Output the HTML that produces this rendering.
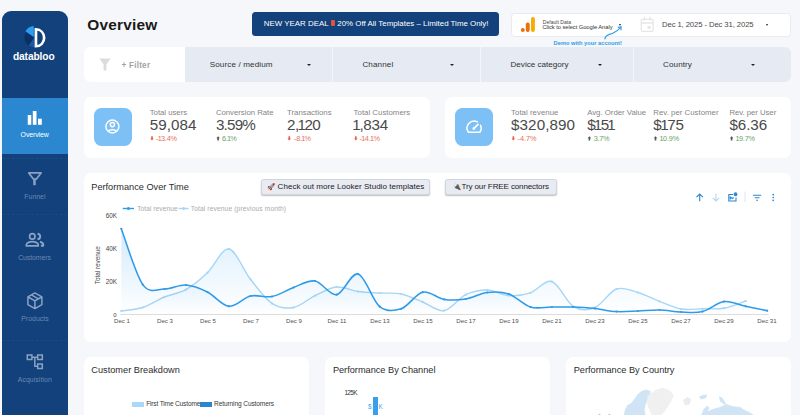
<!DOCTYPE html>
<html><head><meta charset="utf-8">
<style>
*{box-sizing:border-box;margin:0;padding:0}
html{background:#f6f7fa}html,body{width:800px;height:415px;overflow:hidden;font-family:"Liberation Sans",sans-serif;color:#333}
.abs,.tx,.tri,.btn{position:absolute}
.tx{white-space:nowrap;line-height:1}
.n1{margin:0 -0.066em 0 -0.085em}
.card{background:#fff;border-radius:7px}
.tri{width:0;height:0;border-left:2px solid transparent;border-right:2px solid transparent;border-top:2.5px solid #222}
.btn{height:16px;background:#e8ebf1;border:1px solid #d0d4db;border-radius:2.5px;box-shadow:0 1px 1.5px rgba(0,0,0,.25)}
</style></head><body>
<div class="abs" style="left:2px;top:11px;width:65.8px;height:410px;background:#12417b;border-radius:9px 9px 0 0"></div>
<div class="abs" style="left:2px;top:97.5px;width:65.8px;height:56.5px;background:#2b88d0"></div>
<div class="abs" style="left:2px;top:157.6px;width:65.800px;height:0;border-top:1px dashed #1a4a86"></div>
<div class="abs" style="left:2px;top:213.8px;width:65.800px;height:0;border-top:1px dashed #1a4a86"></div>
<div class="abs" style="left:2px;top:340.4px;width:65.800px;height:0;border-top:1px dashed #1a4a86"></div>
<!-- logo + nav icons + misc icons, page coordinates -->
<svg class="abs" style="left:0;top:0" width="800" height="415" viewBox="0 0 800 415">
<path d="M34.300 37.600L25.800 32.800A9.800 9.800 0 0 0 34.300 47.400Z" fill="#0c2f66"/>
<path d="M34.300 37.600L28.600 45.600A9.800 9.800 0 0 0 34.300 47.400Z" fill="#1b58a6"/>
<path d="M33.800 26.100V37.100L25.500 31.300A10 10 0 0 1 33.800 26.100Z" fill="#2a9df0"/>
<path d="M34.6 28.1h1.4a9.5 9.75 0 0 1 0 19.5h-1.4zM37.3 30.8v14.1a5.5 7.05 0 0 0 0-14.1z" fill="#fff" fill-rule="evenodd"/>
<!-- overview bars -->
<rect x="27.750" y="115" width="3.500" height="9.800" fill="#fff"/><rect x="32.800" y="111" width="3.700" height="13.800" fill="#fff"/><rect x="38" y="118.700" width="3.800" height="6.100" fill="#fff"/>
<g fill="none" stroke="#8aa2c4" stroke-width="1.700" stroke-linejoin="round">
<path d="M28.700 172.900h12.400l-4.900 6.300h-2.600z"/><path d="M34.500 179v6.200" stroke-width="2.500" stroke-linecap="butt"/>
<circle cx="32.300" cy="236.400" r="2.700"/><path d="M26.300 245.800v-1c0-2.200 4-3.200 6-3.200s6 1 6 3.200v1z"/>
<path d="M37.500 233.700a2.700 2.700 0 0 1 0 5.400M40 241.800c1.700.5 3.200 1.400 3.200 2.900v1.100h-2.300" stroke-width="2"/>
<path d="M34.900 292.900l7 3.900v7.800l-7 4-7-4v-7.800zM28.200 297l6.700 3.800 6.700-3.800M34.900 300.800v7.600M31.400 294.900l7 3.900" stroke-width="1.500"/>
<path d="M27.300 355h4.600v4.600h-4.600zM37.700 355h4.600v4.600h-4.600zM37.700 364h4.600v4.600h-4.600zM31.900 357.300h5.800M34.800 357.300v9h2.900" stroke-width="1.500" stroke-linejoin="miter"/>
</g>
<!-- GA icon -->
<rect x="531" y="17" width="3.900" height="15" rx="1.900" fill="#f9ab00"/><rect x="525.800" y="22.500" width="3.900" height="9.500" rx="1.900" fill="#e8710a"/><circle cx="522.800" cy="30" r="1.950" fill="#e8710a"/>
<!-- blue arrow -->
<path d="M604.800 39.300c0.500-5 4.500-4.500 8-6s5.500-3 7.700-5.800" fill="none" stroke="#2b9be8" stroke-width="1.200"/><path d="M617.800 27.300l3.300-0.400-.2 3.300" fill="none" stroke="#2b9be8" stroke-width="1.200"/>
<!-- calendar -->
<g fill="none" stroke="#e6e6e6" stroke-width="1.300"><rect x="641.300" y="19.300" width="11.800" height="12" rx="1.600"/><path d="M641.300 23h11.800M644.5 16.8v3.5M650 16.8v3.5"/></g><rect x="647.500" y="26" width="3" height="3" fill="#e6e6e6"/>
<!-- filter icon -->
<path d="M99.300 58.500h11.400l-4.300 5.700v6.300h-2.800v-6.300z" fill="#dcdcdc"/>
<!-- KPI icons -->
<g fill="none" stroke="#fff" stroke-width="1.450"><circle cx="112.400" cy="126.500" r="6.500"/><circle cx="112.400" cy="124.600" r="2.100"/><path d="M108.300 131.300c1-2.200 7.200-2.200 8.200 0"/></g>
<g fill="none" stroke="#fff" stroke-width="1.500" stroke-linejoin="round" stroke-linecap="round"><path d="M468.400 132.200A7 7 0 0 1 477.400 121.950M480.500 125.200A7 7 0 0 1 479.800 132.200H468.400"/><path d="M474 128.400L478 124.300" stroke-width="1.700"/></g><circle cx="473.800" cy="128.600" r="1.400" fill="#fff"/>
<!-- delta arrows -->
<g fill="#e8604c"><path id="dn" d="M151.200 136.200h1.600v2.200h1l-1.800 2-1.800-2h1z"/><use href="#dn" x="137.250"/><use href="#dn" x="203.850"/><use href="#dn" x="361.350"/></g>
<g fill="#555"><path id="up" d="M217.300 140.400h1.600v-2.200h1l-1.800-2-1.800 2h1z"/><use href="#up" x="371.300"/><use href="#up" x="437.400"/><use href="#up" x="513.500"/></g>
</svg>
<div class="tri" style="left:619.1px;top:23.7px;border-left-width:1.6px;border-right-width:1.6px;border-top-width:2px"></div>
<div class="tri" style="left:765.600px;top:23.500px;border-left-width:1.700px;border-right-width:1.700px;border-top-width:2.100px"></div>

<!-- header -->
<div class="abs" style="left:252px;top:12.300px;width:247px;height:23.400px;background:#12417b;border-radius:3.500px"></div>
<div class="abs" style="left:511px;top:12.500px;width:280px;height:24px;background:#fff;border:1px solid #e8eaef;border-radius:3.500px;z-index:-1"></div>

<!-- filter bar -->
<div class="abs" style="left:84px;top:47px;width:706.500px;height:35px;background:#e6eaf2;border-radius:6px;z-index:-1"></div>
<div class="abs" style="left:84px;top:47px;width:101px;height:35px;background:#fff;border-radius:6px 0 0 6px;z-index:-1"></div>
<div class="abs" style="left:332px;top:47px;width:1px;height:35px;background:#f3f5f9"></div>
<div class="abs" style="left:480px;top:47px;width:1px;height:35px;background:#f3f5f9"></div>
<div class="abs" style="left:633px;top:47px;width:1px;height:35px;background:#f3f5f9"></div>
<div class="tri" style="left:307.400px;top:63.500px"></div>
<div class="tri" style="left:450.200px;top:63.500px"></div>
<div class="tri" style="left:598px;top:63.500px"></div>
<div class="tri" style="left:751px;top:63.500px"></div>

<!-- cards -->
<div class="abs card" style="left:84px;top:97px;width:345.500px;height:61px;z-index:-1"></div>
<div class="abs card" style="left:444.500px;top:97px;width:346px;height:61px;z-index:-1"></div>
<div class="abs" style="left:93.500px;top:108px;width:38px;height:38px;border-radius:7.500px;background:#7cc0f5;z-index:-1"></div>
<div class="abs" style="left:455px;top:108px;width:38px;height:38px;border-radius:7.500px;background:#7cc0f5;z-index:-1"></div>
<div class="abs card" style="left:84px;top:172.500px;width:706.500px;height:169.500px;z-index:-2"></div>
<div class="btn" style="left:261px;top:178.7px;width:169px;z-index:-1"></div>
<div class="btn" style="left:444.5px;top:178.7px;width:112.500px;z-index:-1"></div>
<div class="tx" style="left:266.6px;top:184px;font-size:6.6px">🚀</div>
<div class="tx" style="left:452.6px;top:184px;font-size:6.6px">🔌</div>

<svg class="abs" style="left:84px;top:172px;z-index:-1" width="706" height="170" viewBox="84 172 706 170" font-family="Liberation Sans, sans-serif">
<defs><linearGradient id="g1" gradientUnits="userSpaceOnUse" x1="0" y1="225" x2="0" y2="314"><stop offset="0" stop-color="#2f9be8" stop-opacity=".22"/><stop offset="1" stop-color="#2f9be8" stop-opacity="0"/></linearGradient>
<linearGradient id="g2" gradientUnits="userSpaceOnUse" x1="0" y1="245" x2="0" y2="314"><stop offset="0" stop-color="#9fd3f7" stop-opacity=".3"/><stop offset="1" stop-color="#9fd3f7" stop-opacity="0"/></linearGradient></defs>
<g stroke="#2b86d0" stroke-width="1.100" fill="none"><path d="M699.700 201.300v-7.300M696.500 197.200l3.200-3.200 3.200 3.200"/><path d="M715.900 193.700v7.300M712.700 197.800l3.200 3.200 3.200-3.200" stroke="#b5d4f0"/><path d="M733 194.500h-4.200v6.500h7.200v-3.500M730.300 199.500v-2.500l2 1.500 1.500-1"/><circle cx="735.500" cy="194.300" r="1.400" fill="#2b86d0"/><path d="M753 195.200h8.200M754.700 197.700h4.800M756.200 200.200h1.800"/></g>
<path d="M745 191.500v10.500" stroke="#d9e6f4" stroke-width="1"/>
<g fill="#2b86d0"><circle cx="773.200" cy="194.700" r="0.850"/><circle cx="773.200" cy="197.500" r="0.850"/><circle cx="773.200" cy="200.300" r="0.850"/></g>
<path d="M122.700 208.500h11.300" stroke="#2f9be8" stroke-width="1.400"/><circle cx="128.400" cy="208.500" r="1.500" fill="#2f9be8"/>
<text x="137.2" y="210.9" font-size="6.7" fill="#ababab" textLength="40.500">Total revenue</text>
<path d="M178.600 208.500h10" stroke="#a6d6f8" stroke-width="1.400"/><circle cx="183.600" cy="208.500" r="1.500" fill="#a6d6f8"/>
<text x="190.7" y="210.9" font-size="6.7" fill="#ababab" textLength="95.400">Total revenue (previous month)</text>
<g font-size="6.4" fill="#444"><text x="105.7" y="217.9" textLength="11.2">60K</text><text x="105.7" y="250.7" textLength="11.2">40K</text><text x="105.7" y="283.5" textLength="11.2">20K</text><text x="113.3" y="316.6" font-size="6">0</text></g>
<text transform="translate(99.8,284.2) rotate(-90)" font-size="6.4" fill="#444" textLength="38">Total revenue</text>
<path d="M120.500 314.500h648" stroke="#dcdcdc" stroke-width="1"/>
<g font-size="6.1" fill="#505050" text-anchor="middle"><text x="122" y="323.300">Dec 1</text><text x="165" y="323.300">Dec 3</text><text x="208" y="323.300">Dec 5</text><text x="251" y="323.300">Dec 7</text><text x="294" y="323.300">Dec 9</text><text x="337" y="323.300">Dec 11</text><text x="380" y="323.300">Dec 13</text><text x="423" y="323.300">Dec 15</text><text x="466" y="323.300">Dec 17</text><text x="509" y="323.300">Dec 19</text><text x="552" y="323.300">Dec 21</text><text x="595" y="323.300">Dec 23</text><text x="638" y="323.300">Dec 25</text><text x="681" y="323.300">Dec 27</text><text x="724" y="323.300">Dec 29</text><text x="767" y="323.300">Dec 31</text></g>
<path d="M121.3 311.0C124.9 310.4 135.7 309.8 142.8 307.5C150.0 305.2 157.2 300.0 164.4 297.0C171.5 294.0 178.7 293.8 185.9 289.7C193.1 285.6 200.2 279.5 207.4 272.7C214.6 265.9 221.8 247.9 228.9 249.0C236.1 250.1 243.3 270.2 250.5 279.3C257.7 288.4 264.8 298.7 272.0 303.4C279.2 308.1 286.4 308.8 293.5 307.5C300.7 306.2 307.9 299.0 315.1 295.6C322.2 292.2 329.4 287.7 336.6 287.0C343.8 286.3 351.0 290.5 358.1 291.5C365.3 292.5 372.5 292.6 379.7 293.0C386.8 293.4 394.0 292.5 401.2 294.0C408.4 295.5 415.5 299.2 422.7 302.0C429.9 304.8 437.1 311.8 444.3 310.6C451.4 309.4 458.6 298.1 465.8 294.7C473.0 291.3 480.1 289.9 487.3 290.0C494.5 290.1 501.7 295.1 508.8 295.6C516.0 296.1 523.2 295.2 530.4 292.8C537.5 290.4 544.7 279.2 551.9 281.5C559.1 283.8 566.3 302.3 573.4 306.6C580.6 310.9 587.8 310.4 595.0 307.5C602.1 304.6 609.3 291.5 616.5 289.0C623.7 286.5 630.8 290.4 638.0 292.5C645.2 294.6 652.4 298.6 659.5 301.3C666.7 304.1 673.9 307.8 681.1 309.0C688.3 310.2 695.4 308.9 702.6 308.8C709.8 308.7 717.0 309.5 724.1 308.2C731.3 306.9 742.1 302.2 745.7 301.0L745.7 314L121.3 314Z" fill="url(#g2)"/><path d="M121.3 311.0C124.9 310.4 135.7 309.8 142.8 307.5C150.0 305.2 157.2 300.0 164.4 297.0C171.5 294.0 178.7 293.8 185.9 289.7C193.1 285.6 200.2 279.5 207.4 272.7C214.6 265.9 221.8 247.9 228.9 249.0C236.1 250.1 243.3 270.2 250.5 279.3C257.7 288.4 264.8 298.7 272.0 303.4C279.2 308.1 286.4 308.8 293.5 307.5C300.7 306.2 307.9 299.0 315.1 295.6C322.2 292.2 329.4 287.7 336.6 287.0C343.8 286.3 351.0 290.5 358.1 291.5C365.3 292.5 372.5 292.6 379.7 293.0C386.8 293.4 394.0 292.5 401.2 294.0C408.4 295.5 415.5 299.2 422.7 302.0C429.9 304.8 437.1 311.8 444.3 310.6C451.4 309.4 458.6 298.1 465.8 294.7C473.0 291.3 480.1 289.9 487.3 290.0C494.5 290.1 501.7 295.1 508.8 295.6C516.0 296.1 523.2 295.2 530.4 292.8C537.5 290.4 544.7 279.2 551.9 281.5C559.1 283.8 566.3 302.3 573.4 306.6C580.6 310.9 587.8 310.4 595.0 307.5C602.1 304.6 609.3 291.5 616.5 289.0C623.7 286.5 630.8 290.4 638.0 292.5C645.2 294.6 652.4 298.6 659.5 301.3C666.7 304.1 673.9 307.8 681.1 309.0C688.3 310.2 695.4 308.9 702.6 308.8C709.8 308.7 717.0 309.5 724.1 308.2C731.3 306.9 742.1 302.2 745.7 301.0" fill="none" stroke="#a6d6f8" stroke-width="1.4" stroke-linecap="round"/><g fill="#a6d6f8"><circle cx="121.3" cy="311.0" r="1.1"/><circle cx="142.8" cy="307.5" r="1.1"/><circle cx="164.4" cy="297.0" r="1.1"/><circle cx="185.9" cy="289.7" r="1.1"/><circle cx="207.4" cy="272.7" r="1.1"/><circle cx="228.9" cy="249.0" r="1.1"/><circle cx="250.5" cy="279.3" r="1.1"/><circle cx="272.0" cy="303.4" r="1.1"/><circle cx="293.5" cy="307.5" r="1.1"/><circle cx="315.1" cy="295.6" r="1.1"/><circle cx="336.6" cy="287.0" r="1.1"/><circle cx="358.1" cy="291.5" r="1.1"/><circle cx="379.7" cy="293.0" r="1.1"/><circle cx="401.2" cy="294.0" r="1.1"/><circle cx="422.7" cy="302.0" r="1.1"/><circle cx="444.3" cy="310.6" r="1.1"/><circle cx="465.8" cy="294.7" r="1.1"/><circle cx="487.3" cy="290.0" r="1.1"/><circle cx="508.8" cy="295.6" r="1.1"/><circle cx="530.4" cy="292.8" r="1.1"/><circle cx="551.9" cy="281.5" r="1.1"/><circle cx="573.4" cy="306.6" r="1.1"/><circle cx="595.0" cy="307.5" r="1.1"/><circle cx="616.5" cy="289.0" r="1.1"/><circle cx="638.0" cy="292.5" r="1.1"/><circle cx="659.5" cy="301.3" r="1.1"/><circle cx="681.1" cy="309.0" r="1.1"/><circle cx="702.6" cy="308.8" r="1.1"/><circle cx="724.1" cy="308.2" r="1.1"/><circle cx="745.7" cy="301.0" r="1.1"/></g>
<path d="M121.3 228.8C124.9 238.1 135.7 274.6 142.8 284.6C150.0 294.6 157.2 288.9 164.4 289.0C171.5 289.1 178.7 284.5 185.9 285.0C193.1 285.5 200.2 288.4 207.4 292.0C214.6 295.6 221.8 305.6 228.9 306.3C236.1 307.0 243.3 297.6 250.5 296.0C257.7 294.4 264.8 297.9 272.0 296.5C279.2 295.1 286.4 290.1 293.5 287.5C300.7 284.9 307.9 279.8 315.1 281.0C322.2 282.2 329.4 295.9 336.6 294.7C343.8 293.5 351.0 272.0 358.1 274.0C365.3 276.0 372.5 300.8 379.7 306.6C386.8 312.4 394.0 311.2 401.2 308.8C408.4 306.4 415.5 293.8 422.7 292.2C429.9 290.6 437.1 298.3 444.3 299.4C451.4 300.5 458.6 300.1 465.8 299.0C473.0 297.9 480.1 293.3 487.3 292.5C494.5 291.7 501.7 291.6 508.8 294.0C516.0 296.4 523.2 304.8 530.4 307.0C537.5 309.2 544.7 307.0 551.9 307.0C559.1 307.0 566.3 306.8 573.4 307.0C580.6 307.2 587.8 307.7 595.0 308.5C602.1 309.3 609.3 311.2 616.5 311.6C623.7 312.0 630.8 311.3 638.0 311.0C645.2 310.7 652.4 309.8 659.5 310.0C666.7 310.2 673.9 311.7 681.1 312.0C688.3 312.3 695.4 313.3 702.6 311.6C709.8 309.9 717.0 302.5 724.1 301.6C731.3 300.7 738.5 304.8 745.7 306.3C752.8 307.8 763.6 310.0 767.2 310.7L767.2 314L121.3 314Z" fill="url(#g1)"/><path d="M121.3 228.8C124.9 238.1 135.7 274.6 142.8 284.6C150.0 294.6 157.2 288.9 164.4 289.0C171.5 289.1 178.7 284.5 185.9 285.0C193.1 285.5 200.2 288.4 207.4 292.0C214.6 295.6 221.8 305.6 228.9 306.3C236.1 307.0 243.3 297.6 250.5 296.0C257.7 294.4 264.8 297.9 272.0 296.5C279.2 295.1 286.4 290.1 293.5 287.5C300.7 284.9 307.9 279.8 315.1 281.0C322.2 282.2 329.4 295.9 336.6 294.7C343.8 293.5 351.0 272.0 358.1 274.0C365.3 276.0 372.5 300.8 379.7 306.6C386.8 312.4 394.0 311.2 401.2 308.8C408.4 306.4 415.5 293.8 422.7 292.2C429.9 290.6 437.1 298.3 444.3 299.4C451.4 300.5 458.6 300.1 465.8 299.0C473.0 297.9 480.1 293.3 487.3 292.5C494.5 291.7 501.7 291.6 508.8 294.0C516.0 296.4 523.2 304.8 530.4 307.0C537.5 309.2 544.7 307.0 551.9 307.0C559.1 307.0 566.3 306.8 573.4 307.0C580.6 307.2 587.8 307.7 595.0 308.5C602.1 309.3 609.3 311.2 616.5 311.6C623.7 312.0 630.8 311.3 638.0 311.0C645.2 310.7 652.4 309.8 659.5 310.0C666.7 310.2 673.9 311.7 681.1 312.0C688.3 312.3 695.4 313.3 702.6 311.6C709.8 309.9 717.0 302.5 724.1 301.6C731.3 300.7 738.5 304.8 745.7 306.3C752.8 307.8 763.6 310.0 767.2 310.7" fill="none" stroke="#2f9be8" stroke-width="1.55" stroke-linecap="round"/><g fill="#2f9be8"><circle cx="121.3" cy="228.8" r="1.1"/><circle cx="142.8" cy="284.6" r="1.1"/><circle cx="164.4" cy="289.0" r="1.1"/><circle cx="185.9" cy="285.0" r="1.1"/><circle cx="207.4" cy="292.0" r="1.1"/><circle cx="228.9" cy="306.3" r="1.1"/><circle cx="250.5" cy="296.0" r="1.1"/><circle cx="272.0" cy="296.5" r="1.1"/><circle cx="293.5" cy="287.5" r="1.1"/><circle cx="315.1" cy="281.0" r="1.1"/><circle cx="336.6" cy="294.7" r="1.1"/><circle cx="358.1" cy="274.0" r="1.1"/><circle cx="379.7" cy="306.6" r="1.1"/><circle cx="401.2" cy="308.8" r="1.1"/><circle cx="422.7" cy="292.2" r="1.1"/><circle cx="444.3" cy="299.4" r="1.1"/><circle cx="465.8" cy="299.0" r="1.1"/><circle cx="487.3" cy="292.5" r="1.1"/><circle cx="508.8" cy="294.0" r="1.1"/><circle cx="530.4" cy="307.0" r="1.1"/><circle cx="551.9" cy="307.0" r="1.1"/><circle cx="573.4" cy="307.0" r="1.1"/><circle cx="595.0" cy="308.5" r="1.1"/><circle cx="616.5" cy="311.6" r="1.1"/><circle cx="638.0" cy="311.0" r="1.1"/><circle cx="659.5" cy="310.0" r="1.1"/><circle cx="681.1" cy="312.0" r="1.1"/><circle cx="702.6" cy="311.6" r="1.1"/><circle cx="724.1" cy="301.6" r="1.1"/><circle cx="745.7" cy="306.3" r="1.1"/><circle cx="767.2" cy="310.7" r="1.1"/></g>

</svg>

<!-- bottom cards -->
<div class="abs card" style="left:84px;top:357px;width:225px;height:70px;z-index:-1"></div>
<div class="abs card" style="left:325px;top:357px;width:225px;height:70px;z-index:-1"></div>
<div class="abs card" style="left:565.500px;top:357px;width:225px;height:70px;z-index:-1"></div>
<div class="abs" style="left:132.200px;top:401.700px;width:12.200px;height:5px;background:#a9d8f8"></div>
<div class="abs" style="left:200.200px;top:401.700px;width:11.700px;height:5px;background:#2b86d0"></div>
<div class="abs" style="left:373px;top:397px;width:5px;height:20px;background:#3a9fe8"></div>
<svg class="abs" style="left:590px;top:380px" width="200" height="35" viewBox="590 380 200 35"><path d="M623.8 415.0L625.0 409.5L627.5 405.0L631.2 403.0L634.5 398.8L637.5 394.5L641.2 391.2L646.2 389.5L650.8 391.2L649.5 396.2L647.0 401.2L645.5 405.0L644.5 410.0L645.5 415.0Z" fill="#d0e4f6"/><path d="M648.0 395.5L655.5 390.0L662.5 387.5L669.5 390.5L673.8 395.0L671.2 401.2L667.5 407.5L663.8 412.5L661.2 415.0L652.0 415.0L648.8 408.8L646.5 402.5Z" fill="#f0f0f0"/><path d="M683.0 400.0L687.5 397.0L691.2 399.5L689.5 404.5L685.0 405.5Z" fill="#ececec"/><path d="M698.8 397.0L702.5 395.0L707.0 394.5L706.2 398.0L701.2 399.5Z" fill="#d0e4f6"/><path d="M718.8 396.2L722.0 397.5L726.2 403.8L723.8 404.5L720.0 401.2Z" fill="#d0e4f6"/><path d="M701.2 415.0L703.8 408.8L707.5 405.8L709.5 408.0L707.5 411.2L713.8 408.8L720.0 407.0L726.2 404.0L732.5 406.2L740.0 407.0L743.8 409.5L750.0 412.5L753.8 415.0Z" fill="#d0e4f6"/><path d="M598 415l1.500-1.500 1.500 1.500zM608 415l1.500-1.500 1.500 1.500z" fill="#a9d2f2"/></svg>
<div class="tx" style="left:12.90px;top:51.77px;font-size:10.20px;color:#fff;font-weight:bold;letter-spacing:-0.094px">databloo</div>
<div class="tx" style="left:20.60px;top:132.06px;font-size:6.90px;color:#fff;;letter-spacing:-0.071px">Overview</div>
<div class="tx" style="left:24.30px;top:194.06px;font-size:6.90px;color:#6a88b2;;letter-spacing:0.020px">Funnel</div>
<div class="tx" style="left:18.20px;top:255.26px;font-size:6.90px;color:#6a88b2;;letter-spacing:-0.070px">Customers</div>
<div class="tx" style="left:21.20px;top:316.16px;font-size:6.90px;color:#6a88b2;;letter-spacing:0.037px">Products</div>
<div class="tx" style="left:17.80px;top:377.16px;font-size:6.90px;color:#6a88b2;;letter-spacing:0.061px">Acquisition</div>
<div class="tx" style="left:263.80px;top:19.81px;font-size:7.90px;color:#fff;;letter-spacing:0.004px">NEW YEAR DEAL <span style="display:inline-block;width:4.6px;height:6.2px;background:#e8503c;border-radius:1px;vertical-align:-0.5px;letter-spacing:0"></span> 20% Off All Templates – Limited Time Only!</div>
<div class="tx" style="left:87.25px;top:17.06px;font-size:15.40px;color:#1a1a1a;font-weight:bold;letter-spacing:0.225px">Overview</div>
<div class="tx" style="left:542.80px;top:19.77px;font-size:5.00px;color:#444;;letter-spacing:0.034px">Default Data</div>
<div class="tx" style="left:542.40px;top:25.19px;font-size:5.80px;color:#333;;letter-spacing:-0.063px">Click to select Google Analy</div>
<div class="tx" style="left:553.60px;top:40.87px;font-size:5.70px;color:#2b9be8;font-weight:bold;letter-spacing:0.015px">Demo with your account!</div>
<div class="tx" style="left:662.00px;top:20.78px;font-size:7.70px;color:#4a4a4a;;letter-spacing:-0.097px">Dec 1, 2025 - Dec 31, 2025</div>
<div class="tx" style="left:121.50px;top:62.36px;font-size:8.20px;color:#a3a3a3;font-weight:bold;letter-spacing:0.215px">+ Filter</div>
<div class="tx" style="left:209.70px;top:60.94px;font-size:8.10px;color:#333;;letter-spacing:0.121px">Source / medium</div>
<div class="tx" style="left:362.40px;top:60.94px;font-size:8.10px;color:#333;;letter-spacing:0.121px">Channel</div>
<div class="tx" style="left:510.50px;top:60.94px;font-size:8.10px;color:#333;;letter-spacing:0.004px">Device category</div>
<div class="tx" style="left:663.00px;top:60.94px;font-size:8.10px;color:#333;;letter-spacing:0.094px">Country</div>
<div class="tx" style="left:149.75px;top:109.10px;font-size:7.80px;color:#858585;;letter-spacing:-0.032px">Total users</div>
<div class="tx" style="left:215.90px;top:109.10px;font-size:7.80px;color:#858585;;letter-spacing:-0.032px">Conversion Rate</div>
<div class="tx" style="left:287.00px;top:109.10px;font-size:7.80px;color:#858585;;letter-spacing:0.020px">Transactions</div>
<div class="tx" style="left:353.60px;top:109.10px;font-size:7.80px;color:#858585;;letter-spacing:0.024px">Total Customers</div>
<div class="tx" style="left:511.10px;top:109.10px;font-size:7.80px;color:#858585;;letter-spacing:0.037px">Total revenue</div>
<div class="tx" style="left:587.20px;top:109.10px;font-size:7.80px;color:#858585;;letter-spacing:-0.012px">Avg. Order Value</div>
<div class="tx" style="left:653.30px;top:109.10px;font-size:7.80px;color:#858585;;letter-spacing:0.026px">Rev. per Customer</div>
<div class="tx" style="left:729.40px;top:109.10px;font-size:7.80px;color:#858585;;letter-spacing:-0.056px">Rev. per User</div>
<div class="tx" style="left:149.75px;top:117.43px;font-size:15.20px;color:#4a4a4a;;letter-spacing:0.066px">59,084</div>
<div class="tx" style="left:215.90px;top:117.43px;font-size:15.20px;color:#4a4a4a;;letter-spacing:-0.776px">3.59%</div>
<div class="tx" style="left:287.00px;top:117.43px;font-size:15.20px;color:#4a4a4a;;letter-spacing:-0.490px">2,<span class="n1">1</span>20</div>
<div class="tx" style="left:353.60px;top:117.43px;font-size:15.20px;color:#4a4a4a;;letter-spacing:-0.307px"><span class="n1">1</span>,834</div>
<div class="tx" style="left:511.10px;top:117.43px;font-size:15.20px;color:#4a4a4a;;letter-spacing:0.068px">$320,890</div>
<div class="tx" style="left:587.20px;top:117.43px;font-size:15.20px;color:#4a4a4a;;letter-spacing:-0.562px">$<span class="n1">1</span>5<span class="n1">1</span></div>
<div class="tx" style="left:653.30px;top:117.43px;font-size:15.20px;color:#4a4a4a;;letter-spacing:-0.333px">$<span class="n1">1</span>75</div>
<div class="tx" style="left:729.40px;top:117.43px;font-size:15.20px;color:#4a4a4a;;letter-spacing:-0.043px">$6.36</div>
<div class="tx" style="left:156.10px;top:135.22px;font-size:7.30px;color:#e8705c;;letter-spacing:-0.235px">-<span class="n1">1</span>3.4%</div>
<div class="tx" style="left:222.00px;top:135.22px;font-size:7.30px;color:#6aa36a;;letter-spacing:-0.270px">6.<span class="n1">1</span>%</div>
<div class="tx" style="left:294.00px;top:135.22px;font-size:7.30px;color:#e8705c;;letter-spacing:-0.240px">-8.<span class="n1">1</span>%</div>
<div class="tx" style="left:359.60px;top:135.22px;font-size:7.30px;color:#e8705c;;letter-spacing:-0.142px">-<span class="n1">1</span>4.<span class="n1">1</span>%</div>
<div class="tx" style="left:517.50px;top:135.22px;font-size:7.30px;color:#e8705c;;letter-spacing:-0.013px">-4.7%</div>
<div class="tx" style="left:593.80px;top:135.22px;font-size:7.30px;color:#6aa36a;;letter-spacing:-0.310px">3.7%</div>
<div class="tx" style="left:660.00px;top:135.22px;font-size:7.30px;color:#6aa36a;;letter-spacing:-0.085px"><span class="n1">1</span>0.9%</div>
<div class="tx" style="left:736.20px;top:135.22px;font-size:7.30px;color:#6aa36a;;letter-spacing:-0.205px"><span class="n1">1</span>9.7%</div>
<div class="tx" style="left:91.25px;top:182.81px;font-size:9.20px;color:#2c2c2c;;letter-spacing:0.006px">Performance Over Time</div>
<div class="tx" style="left:277.60px;top:183.43px;font-size:8.00px;color:#222;;letter-spacing:0.046px">Check out more Looker Studio templates</div>
<div class="tx" style="left:461.50px;top:183.43px;font-size:8.00px;color:#222;;letter-spacing:-0.111px">Try our FREE connectors</div>
<div class="tx" style="left:91.25px;top:365.71px;font-size:9.20px;color:#2c2c2c;;letter-spacing:0.017px">Customer Breakdown</div>
<div class="tx" style="left:332.90px;top:365.71px;font-size:9.20px;color:#2c2c2c;;letter-spacing:-0.003px">Performance By Channel</div>
<div class="tx" style="left:573.70px;top:365.71px;font-size:9.20px;color:#2c2c2c;;letter-spacing:0.009px">Performance By Country</div>
<div class="tx" style="left:146.20px;top:400.81px;font-size:6.60px;color:#3a3a3a;;letter-spacing:-0.175px">First Time Custome</div>
<div class="tx" style="left:214.10px;top:400.81px;font-size:6.60px;color:#3a3a3a;;letter-spacing:-0.127px">Returning Customers</div>
<div class="tx" style="left:344.40px;top:390.08px;font-size:6.40px;color:#333;;letter-spacing:-0.634px">125K</div>
<div class="tx" style="left:368.00px;top:403.68px;font-size:6.40px;color:#45a6ef;;letter-spacing:0.561px">$1 K</div>
</body></html>
